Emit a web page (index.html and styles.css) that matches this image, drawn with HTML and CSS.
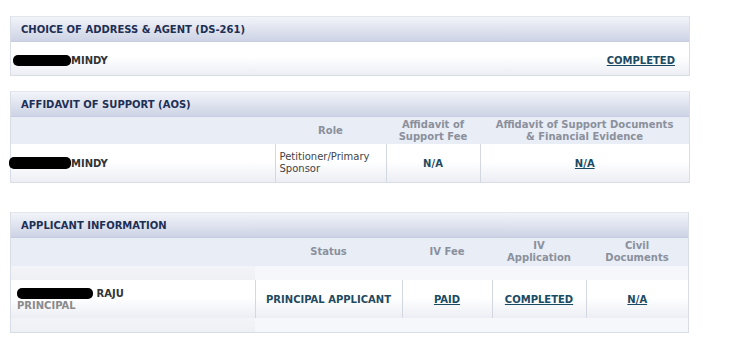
FILE: index.html
```html
<!DOCTYPE html>
<html>
    <head>
        <title>Case Status</title>
        <meta charset="UTF-8">
        <link rel="stylesheet" href="styles.css">
    </head>
    <body>
        <div class="panel" id="ds261">
            <div class="panel-head">CHOICE OF ADDRESS &amp; AGENT (DS-261)</div>
            <table class="grid">
                <tr class="data">
                    <td class="name first"><span class="redact r1"></span>MINDY</td>
                    <td class="status-right"><a href="#">COMPLETED</a></td>
                </tr>
            </table>
        </div>

        <div class="panel" id="aos">
            <div class="panel-head">AFFIDAVIT OF SUPPORT (AOS)</div>
            <table class="grid">
                <colgroup>
                    <col class="aos-name">
                    <col class="aos-role">
                    <col class="aos-fee">
                    <col>
                </colgroup>
                <tr class="cols">
                    <th></th>
                    <th>Role</th>
                    <th>Affidavit of<br>Support Fee</th>
                    <th>Affidavit of Support Documents<br>&amp; Financial Evidence</th>
                </tr>
                <tr class="data">
                    <td class="name second"><span class="redact r2"></span>MINDY</td>
                    <td class="role">Petitioner/Primary<br>Sponsor</td>
                    <td class="plain">N/A</td>
                    <td><a href="#">N/A</a></td>
                </tr>
            </table>
        </div>

        <div class="panel" id="applicants">
            <div class="panel-head">APPLICANT INFORMATION</div>
            <table class="grid">
                <colgroup>
                    <col class="app-name">
                    <col class="app-status">
                    <col class="app-fee">
                    <col class="app-form">
                    <col>
                </colgroup>
                <tr class="cols">
                    <th></th>
                    <th>Status</th>
                    <th>IV Fee</th>
                    <th>IV<br>Application</th>
                    <th>Civil<br>Documents</th>
                </tr>
                <tr class="strip"><td class="strip-name"></td><td colspan="4"></td></tr>
                <tr class="data">
                    <td class="name third">
                        <span class="redact r3"></span> RAJU<br>
                        <span class="kind">PRINCIPAL</span>
                    </td>
                    <td class="plain">PRINCIPAL APPLICANT</td>
                    <td><a href="#">PAID</a></td>
                    <td><a href="#">COMPLETED</a></td>
                    <td><a href="#">N/A</a></td>
                </tr>
                <tr class="strip"><td class="strip-name"></td><td colspan="4"></td></tr>
            </table>
        </div>
    </body>
</html>
```

FILE: styles.css
```css
body {
    margin: 0;
    padding: 16px 0 0 10px;
    background-color: white;
    font-family: "DejaVu Sans", Verdana, sans-serif;
    font-size: 10px;
    color: #333;
}

.panel {
    width: 680px;
    box-sizing: border-box;
    border: 1px solid #d9dde6;
    border-top-color: #e3e6ee;
}

#aos {
    margin-top: 15px;
}

#applicants {
    margin-top: 29px;
    width: 679px;
}

.panel-head {
    height: 24px;
    line-height: 25px;
    padding-left: 10px;
    font-weight: bold;
    color: #1e2f55;
    background: linear-gradient(#f2f4f9, #cdd3e5);
    border-bottom: 1px solid #c6cde0;
}

.grid {
    width: 100%;
    border-collapse: collapse;
    table-layout: fixed;
}

.aos-name { width: 264px; }
.aos-role { width: 111px; }
.aos-fee { width: 94px; }

.app-name { width: 244px; }
.app-status { width: 147px; }
.app-fee { width: 90px; }
.app-form { width: 94px; }

.cols th {
    height: 27px;
    padding: 0;
    background-color: #e8edf6;
    color: #8b909c;
    font-weight: bold;
    line-height: 12px;
    text-align: center;
    vertical-align: middle;
}

#applicants .cols th {
    height: 28px;
}

.data td {
    padding: 0;
    font-weight: bold;
    text-align: center;
    vertical-align: middle;
    background: linear-gradient(#ffffff, #ffffff 45%, #eceef4);
    border-left: 1px solid #d3d7df;
}

.data td.name {
    border-left: none;
    text-align: left;
    color: #333;
}

#ds261 .data td {
    height: 29px;
    padding-top: 4px;
    border-left: none;
}

#aos .data td {
    height: 38px;
}

#applicants .data td {
    height: 38px;
}

.data a {
    color: #1b4a63;
}

.plain {
    color: #1f4a60;
}

.status-right {
    text-align: right !important;
    padding-right: 14px !important;
}

.first {
    padding-left: 2px !important;
}

.second {
    padding-left: 0 !important;
}

#applicants .data td.third {
    height: 30px;
    padding: 8px 0 0 6px;
    line-height: 12px;
    vertical-align: top;
}

.kind {
    color: #8a8a8a;
}

td.role {
    text-align: left;
    padding-left: 4px;
    font-weight: normal;
    color: #444;
    line-height: 12px;
}

.redact {
    display: inline-block;
    background-color: #000;
    border-radius: 5px;
    vertical-align: -2px;
}

.r1 {
    width: 58px;
    height: 11px;
}

.r2 {
    width: 62px;
    height: 12px;
    margin-left: -2px;
}

.r3 {
    width: 76px;
    height: 11px;
}

.strip td {
    height: 14px;
    padding: 0;
    background-color: #f6f7fa;
}

.strip td.strip-name {
    background: linear-gradient(#f3f4f8, #eef0f4);
}
```
